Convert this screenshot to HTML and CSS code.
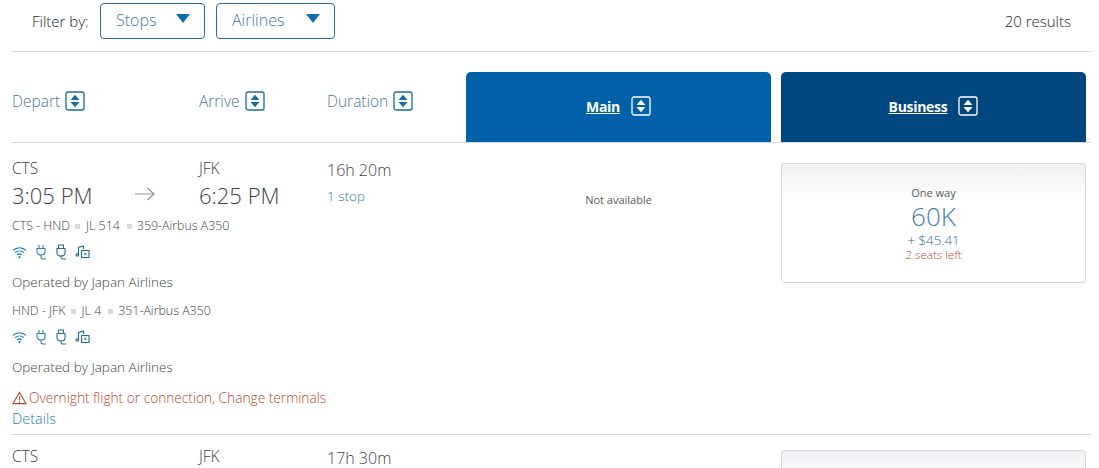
FILE: index.html
```html
<!DOCTYPE html>
<html>
<head>
  <title>results</title>
  <meta charset="utf-8">
  <link rel="stylesheet" href="styles.css">
</head>
<body>
  <svg class="defs" width="0" height="0">
    <symbol id="sort" viewBox="0 0 20 20">
      <rect x="1" y="1" width="18" height="18" rx="2" fill="none" stroke="currentColor" stroke-width="1.300"/>
      <path d="M10 3.800 14.500 9H5.500zM10 16.200 5.500 11H14.500z" fill="currentColor"/>
    </symbol>
    <symbol id="wifi" viewBox="0 0 16 14">
      <g fill="none" stroke="#0078b4" stroke-width="1.100">
        <path d="M1 4.800C5 1 11 1 15 4.800"/>
        <path d="M3.300 7.200C6 4.800 10 4.800 12.700 7.200"/>
        <path d="M5.500 9.500C7 8.300 9 8.300 10.500 9.500"/>
      </g>
      <circle cx="8" cy="12" r="1.100" fill="#0078b4"/>
    </symbol>
    <symbol id="plug" viewBox="0 0 12 16">
      <g fill="none" stroke="#2a7fa8" stroke-width="1.100">
        <path d="M4 1V4.500M8 1V4.500"/>
        <path d="M2 4.500H10V8C10 10 8 11 6 11S2 10 2 8Z"/>
        <path d="M6 11V13.500C6 14.700 7 15 8 15H11"/>
      </g>
    </symbol>
    <symbol id="usb" viewBox="0 0 12 16">
      <g fill="none" stroke="#2a6d94" stroke-width="1.100">
        <path d="M3.500 1H8.500V4.500H3.500Z"/>
        <path d="M2 4.500H10V9C10 11 8 12 6 12S2 11 2 9Z"/>
        <path d="M6 12V13.500C6 14.700 7 15 8 15H11"/>
      </g>
    </symbol>
    <symbol id="media" viewBox="0 0 15 14">
      <g fill="none" stroke="#1f6a9a" stroke-width="1.100">
        <path d="M3.500 9.500V2.500L8.500 1V4"/>
        <ellipse cx="2.300" cy="10" rx="1.300" ry="1.100"/>
        <path d="M6.500 5.500H14V12.500H6.500Z"/>
      </g>
      <path d="M9.500 7.500 12 9 9.500 10.500Z" fill="#1f6a9a"/>
    </symbol>
  </svg>

  <div class="filter-bar">
    <span class="filter-label">Filter by:</span>
    <button class="filter-btn btn-stops">Stops<span class="caret"></span></button>
    <button class="filter-btn btn-airlines">Airlines<span class="caret"></span></button>
    <span class="results">20 results</span>
  </div>

  <div class="head-row">
    <div class="head-col head-first">Depart <svg class="sort"><use href="#sort"/></svg></div>
    <div class="head-col">Arrive <svg class="sort"><use href="#sort"/></svg></div>
    <div class="head-col">Duration <svg class="sort"><use href="#sort"/></svg></div>
    <div class="tab tab-main"><a href="#">Main</a><svg class="sort"><use href="#sort"/></svg></div>
    <div class="tab tab-business"><a href="#">Business</a><svg class="sort"><use href="#sort"/></svg></div>
  </div>

  <div class="flight">
    <div class="flight-info">
      <div class="times">
        <div class="place">
          <div class="code">CTS</div>
          <div class="time-row">
            <div class="time">3:05 PM</div>
            <svg class="arrow" viewBox="0 0 20 14"><path d="M0 7H19M12.500 1 19 7 12.500 13" fill="none" stroke="#8f9599" stroke-width="1.200"/></svg>
          </div>
        </div>
        <div class="place">
          <div class="code">JFK</div>
          <div class="time">6:25 PM</div>
        </div>
        <div class="duration">
          <div class="hours">16h 20m</div>
          <a class="stops" href="#">1 stop</a>
        </div>
      </div>

      <div class="leg leg-first">CTS - HND<i></i>JL 514<i class="wide"></i>359-Airbus A350</div>
      <div class="amenities">
        <svg class="i-wifi"><use href="#wifi"/></svg>
        <svg class="i-tall"><use href="#plug"/></svg>
        <svg class="i-tall"><use href="#usb"/></svg>
        <svg class="i-media"><use href="#media"/></svg>
      </div>
      <div class="operated">Operated by Japan Airlines</div>

      <div class="leg">HND - JFK<i></i>JL 4<i class="wide"></i>351-Airbus A350</div>
      <div class="amenities">
        <svg class="i-wifi"><use href="#wifi"/></svg>
        <svg class="i-tall"><use href="#plug"/></svg>
        <svg class="i-tall"><use href="#usb"/></svg>
        <svg class="i-media"><use href="#media"/></svg>
      </div>
      <div class="operated">Operated by Japan Airlines</div>

      <div class="warning">
        <svg class="warn-icon" viewBox="0 0 16 14"><path d="M8 1 15 13H1ZM8 5V9.500M8 10.500V12" fill="none" stroke="#b5492a" stroke-width="1.100"/></svg>
        Overnight flight or connection, Change terminals
      </div>
      <a class="details" href="#">Details</a>
    </div>
    <div class="fare-none">Not available</div>
    <div class="fare-cell">
      <div class="card">
        <div class="oneway">One way</div>
        <div class="miles">60K</div>
        <div class="fee">+ $45.41</div>
        <div class="seats">2 seats left</div>
      </div>
    </div>
  </div>

  <div class="flight flight-next">
    <div class="flight-info">
      <div class="times">
        <div class="place"><div class="code">CTS</div></div>
        <div class="place"><div class="code">JFK</div></div>
        <div class="duration"><div class="hours">17h 30m</div></div>
      </div>
    </div>
    <div class="fare-none"></div>
    <div class="fare-cell"><div class="card"></div></div>
  </div>
</body>
</html>
```

FILE: styles.css
```css
*{
  padding:0;
  margin:0;
  box-sizing:border-box;
}
html,body{
  height:468px;
  overflow:hidden;
}
body{
  background:#fff;
  color:#3d444a;
  font-family:"Open Sans","Noto Sans",sans-serif;
  font-weight:300;
  font-size:14px;
}
a{
  text-decoration:none;
}
.defs{
  display:block;
  height:0;
}

/* filter bar */
.filter-bar{
  display:flex;
  align-items:flex-start;
  height:52px;
  margin:0 8px 0 11px;
  padding:3px 20px 0 21px;
  border-bottom:1px solid #d9dcde;
}
.filter-label{
  width:58px;
  color:#24282b;
  font-size:15px;
  line-height:36px;
  white-space:nowrap;
  margin-right:10px;
}
.filter-btn{
  display:flex;
  align-items:center;
  justify-content:space-between;
  height:36px;
  background:#fff;
  border:1px solid #2a6f96;
  border-radius:4px;
  color:#4d7a96;
  font:300 16px "Open Sans","Noto Sans",sans-serif;
  padding:0 14px 2px 15px;
}
.btn-stops{
  width:105px;
  margin-right:11px;
}
.btn-airlines{
  width:119px;
}
.caret{
  width:0;
  height:0;
  border-left:7px solid transparent;
  border-right:7px solid transparent;
  border-top:9px solid #0e6fab;
  margin-bottom:4px;
}
.results{
  margin-left:auto;
  color:#24282b;
  font-size:15px;
  line-height:37px;
}

/* column heads */
.head-row{
  display:grid;
  grid-template-columns:188px 128px 139px 305px 305px;
  height:91px;
  margin:0 8px 0 11px;
  border-bottom:1px solid #d9dcde;
  padding-top:20px;
}
.head-col{
  display:flex;
  align-items:center;
  gap:5px;
  height:58px;
  color:#4d7a96;
  font-size:15.500px;
}
.head-first{
  padding-left:1px;
}
.sort{
  width:20px;
  height:20px;
  color:#1a6d9e;
}
.tab{
  display:flex;
  align-items:center;
  justify-content:center;
  gap:11px;
  height:70px;
  border-radius:5px 5px 0 0;
  color:#fff;
  padding-bottom:2px;
}
.tab a{
  color:#fff;
  font-weight:700;
  font-size:14px;
  text-decoration:underline;
  letter-spacing:-0.300px;
}
.tab .sort{
  color:#fff;
}
.tab-main{
  background:#0061a8;
}
.tab-business{
  background:#00467f;
  margin-left:10px;
  margin-right:-10px;
}

/* flight row */
.flight{
  display:grid;
  grid-template-columns:455px 305px 305px;
  height:292px;
  margin:0 8px 0 11px;
  border-bottom:1px solid #d9dcde;
}
.flight-info{
  padding:16px 0 0 1px;
}
.times{
  display:grid;
  grid-template-columns:187px 128px 139px;
  height:55px;
}
.code{
  font-size:15.500px;
  line-height:18px;
}
.time-row{
  display:flex;
  align-items:center;
}
.time{
  font-size:22px;
  line-height:30px;
  margin-top:3px;
}
.arrow{
  width:20px;
  height:14px;
  margin:1px 0 0 42px;
}
.hours{
  font-size:16px;
  line-height:20px;
  margin-top:1px;
}
.stops{
  display:block;
  color:#2a7fa8;
  font-size:13.500px;
  line-height:20px;
  margin-top:6px;
}
.leg{
  display:flex;
  align-items:center;
  font-size:12.400px;
  line-height:16px;
  height:16px;
}
.leg-first{
  margin-top:4px;
}
.leg i{
  display:block;
  width:5px;
  height:5px;
  margin:0 6px 0 5px;
  background:#d9dcde;
}
.leg i.wide{
  margin:0 5px 0 7px;
}
.amenities{
  display:flex;
  align-items:center;
  gap:8px;
  height:16px;
  margin-top:10px;
}
.i-wifi{
  width:15px;
  height:13px;
}
.i-tall{
  width:12px;
  height:16px;
}
.i-media{
  width:15px;
  height:14px;
}
.operated{
  font-size:13.500px;
  line-height:16px;
  margin-top:14px;
  margin-bottom:13px;
}
.warning{
  display:flex;
  align-items:center;
  gap:2px;
  color:#b5492a;
  font-size:13.700px;
  line-height:18px;
  margin-top:14px;
}
.warn-icon{
  width:15px;
  height:14px;
}
.details{
  display:block;
  color:#2a7fa8;
  font-size:14.500px;
  line-height:20px;
  margin-top:2px;
}
.fare-none{
  padding-top:49px;
  text-align:center;
  font-size:11px;
  line-height:16px;
  font-weight:400;
  color:#555c61;
}
.fare-cell{
  padding:20px 0 0 10px;
  margin-right:-10px;
}
.card{
  height:120px;
  border:1px solid #d5d9dc;
  border-radius:3px;
  background:linear-gradient(#eef1f3,#fff 38px);
  text-align:center;
  padding-top:21px;
}
.oneway{
  font-size:11px;
  line-height:15px;
  font-weight:400;
  color:#555c61;
}
.miles{
  color:#4a80a8;
  font-size:26px;
  line-height:28px;
  margin-top:2px;
}
.fee{
  color:#2f6a96;
  font-size:13.300px;
  line-height:15px;
  margin-top:3px;
}
.seats{
  color:#b5492a;
  font-size:11.600px;
  line-height:13px;
}
.flight-next{
  height:33px;
  border-bottom:0;
  overflow:hidden;
}
.flight-next .flight-info{
  padding-top:12px;
}
.flight-next .fare-cell{
  padding-top:15px;
}
```
